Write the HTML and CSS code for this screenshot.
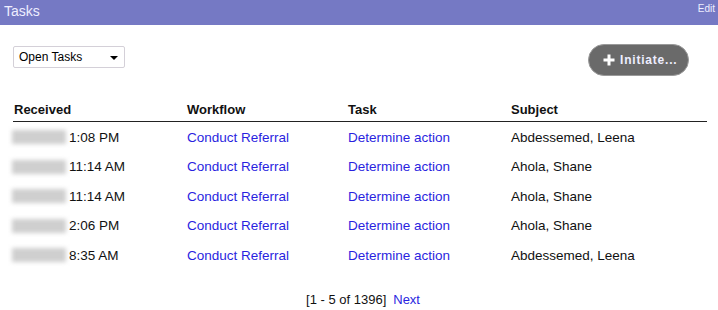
FILE: index.html
```html
<!DOCTYPE html>
<html>
<head>
<meta charset="utf-8">
<link rel="stylesheet" href="styles.css">
</head>
<body>
<div class="titlebar">
  <span class="title">Tasks</span>
  <span class="edit">Edit</span>
</div>
<div class="toolbar">
  <div class="select">
    <span>Open Tasks</span>
    <span class="arrow"></span>
  </div>
  <div class="btn">
    <svg class="plus" width="12" height="12" viewBox="0 0 12 12"><path d="M4.5 0.5h3v4h4v3h-4v4h-3v-4h-4v-3h4z" fill="#fff"/></svg>
    <span>Initiate...</span>
  </div>
</div>
<div class="table">
  <div class="row head">
    <div>Received</div><div>Workflow</div><div>Task</div><div>Subject</div>
  </div>
  <div class="row">
    <div><span class="blur"></span>1:08 PM</div><div class="link">Conduct Referral</div><div class="link">Determine action</div><div>Abdessemed, Leena</div>
  </div>
  <div class="row">
    <div><span class="blur"></span>11:14 AM</div><div class="link">Conduct Referral</div><div class="link">Determine action</div><div>Ahola, Shane</div>
  </div>
  <div class="row">
    <div><span class="blur"></span>11:14 AM</div><div class="link">Conduct Referral</div><div class="link">Determine action</div><div>Ahola, Shane</div>
  </div>
  <div class="row">
    <div><span class="blur"></span>2:06 PM</div><div class="link">Conduct Referral</div><div class="link">Determine action</div><div>Ahola, Shane</div>
  </div>
  <div class="row">
    <div><span class="blur"></span>8:35 AM</div><div class="link">Conduct Referral</div><div class="link">Determine action</div><div>Abdessemed, Leena</div>
  </div>
</div>
<div class="pager">
  <span>[1 - 5 of 1396]</span><span class="link next">Next</span>
</div>
</body>
</html>
```
FILE: styles.css
```css
html, body {
  margin: 0;
  padding: 0;
  background: #fff;
  font-family: "Liberation Sans", Arial, sans-serif;
  color: #111;
}
.titlebar {
  height: 25px;
  background: #7579c4;
  display: flex;
  justify-content: space-between;
  align-items: center;
  padding: 0 3px 0 4px;
}
.title {
  color: #eef;
  font-size: 14px;
  margin-top: -3px;
}
.edit {
  color: #eef;
  font-size: 10px;
  margin-top: -9px;
}
.toolbar {
  display: flex;
  justify-content: space-between;
  align-items: flex-start;
  padding: 19px 29px 0 13px;
  height: 63px;
  box-sizing: border-box;
}
.select {
  margin-top: 2px;
  width: 112px;
  height: 22px;
  box-sizing: border-box;
  border: 1px solid #d4d0d8;
  border-radius: 2px;
  display: flex;
  align-items: center;
  justify-content: space-between;
  padding: 0 6px 0 5px;
  font-size: 12px;
  color: #000;
}
.arrow {
  width: 0;
  height: 0;
  border-left: 4px solid transparent;
  border-right: 4px solid transparent;
  border-top: 4px solid #000;
  margin-top: 2px;
}
.btn {
  width: 101px;
  height: 32px;
  box-sizing: border-box;
  border-radius: 16px;
  background: #6a6a6a;
  border: 1px solid #9a9a9a;
  display: flex;
  align-items: center;
  padding-left: 14px;
  gap: 5px;
  color: #eef;
  font-size: 12px;
  font-weight: bold;
  letter-spacing: 0.8px;
}
.plus {
  display: block;
}
.table {
  margin: 0 11px 0 13px;
  padding-top: 9px;
}
.row {
  display: grid;
  grid-template-columns: 173px 161px 163px 1fr;
  height: 29.5px;
  align-items: center;
  font-size: 13.5px;
}
.row > div {
  padding-left: 1px;
  display: flex;
  align-items: center;
  padding-top: 1px;
}
.row.head {
  height: 25px;
  font-size: 13px;
  font-weight: bold;
  border-bottom: 1px solid #222;
  align-items: start;
  padding-top: 4px;
  box-sizing: border-box;
}
.blur {
  display: inline-block;
  width: 54px;
  height: 14px;
  background: #cfcfcf;
  filter: blur(2px);
  margin-left: -2px;
  margin-right: 3px;
}
.link {
  color: #2a1fe0;
}
.pager {
  margin-top: 22px;
  text-align: center;
  font-size: 13px;
  color: #111;
  padding-left: 8px;
}
.next {
  margin-left: 7px;
}
```
